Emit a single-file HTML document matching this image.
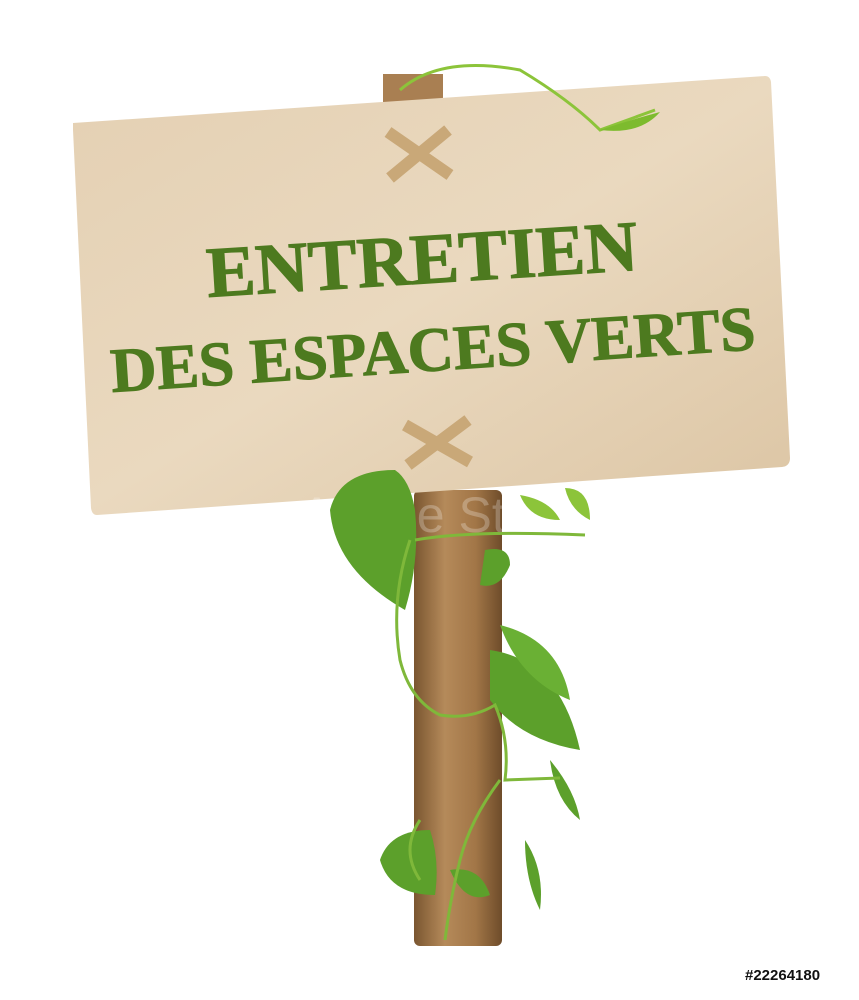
<!DOCTYPE html>
<html><head><meta charset="utf-8"><style>
html,body{margin:0;padding:0;background:#fff;}
body{width:859px;height:1000px;position:relative;overflow:hidden;font-family:"Liberation Sans",sans-serif;}
.id{position:absolute;left:745px;top:967px;font-size:15px;font-weight:bold;color:#111;}
</style></head><body>
<svg width="859" height="1000" viewBox="0 0 859 1000" style="position:absolute;left:0;top:0">
<defs>
<linearGradient id="wood" x1="0" y1="0" x2="1" y2="1">
<stop offset="0" stop-color="#e4d0b3"/><stop offset="0.5" stop-color="#ead9bf"/><stop offset="1" stop-color="#dcc5a4"/>
</linearGradient>
<linearGradient id="pole" x1="0" y1="0" x2="1" y2="0">
<stop offset="0" stop-color="#7a5630"/><stop offset="0.35" stop-color="#b58a5a"/><stop offset="0.7" stop-color="#a27647"/><stop offset="1" stop-color="#6e4c2a"/>
</linearGradient>
</defs>
<rect x="383" y="74" width="60" height="30" fill="#a97f52"/>
<rect x="414" y="490" width="88" height="456" rx="6" fill="url(#pole)"/>
<path d="M73 123 L765 76 Q770 76 771 82 L790 458 Q790 466 782 467 L97 515 Q92 515 91 508 L73 130 Z" fill="url(#wood)"/>
<path d="M388 132 L450 175 M448 130 L390 178" stroke="#c9a878" stroke-width="12"/>
<path d="M405 425 L470 462 M468 420 L408 465" stroke="#c9a878" stroke-width="12"/>
<g font-family="Liberation Serif,serif" font-weight="bold" fill="#4d7a1f" stroke="#4d7a1f" stroke-width="1">
<text x="208" y="297" font-size="72" transform="rotate(-3.6 208 297)" textLength="432" lengthAdjust="spacingAndGlyphs">ENTRETIEN</text>
<text x="112" y="392" font-size="63" transform="rotate(-3.8 112 392)" textLength="646" lengthAdjust="spacingAndGlyphs">DES ESPACES VERTS</text>
</g>
<g fill="#ffffff" opacity="0.25" font-size="50">
<text x="300" y="532">Adobe Stock</text>
</g>
<path d="M400 90 Q440 55 520 70 Q570 100 600 130 L655 110" stroke="#8cc43a" stroke-width="3" fill="none"/>
<path d="M600 130 Q630 120 660 112 Q640 135 600 130Z" fill="#7dbb2e"/>
<g fill="#5ca02b">
<path d="M395 470 Q340 470 330 510 Q335 570 405 610 Q420 560 415 510 Q410 480 395 470Z"/>
<path d="M485 550 Q510 545 510 565 Q500 590 480 585 Z"/>
<path d="M490 650 Q560 660 580 750 Q520 740 490 700 Z"/>
<path d="M500 625 Q560 640 570 700 Q520 680 500 625Z" fill="#6ab034"/>
<path d="M520 495 Q550 500 560 520 Q530 520 520 495Z" fill="#8cc43a"/>
<path d="M565 488 Q590 488 590 520 Q570 510 565 488Z" fill="#8cc43a"/>
<path d="M430 830 Q390 830 380 860 Q390 895 435 895 Q440 860 430 830Z"/>
<path d="M450 870 Q480 865 490 895 Q465 905 450 870Z"/>
<path d="M525 840 Q545 870 540 910 Q525 880 525 840Z"/>
<path d="M550 760 Q575 790 580 820 Q555 800 550 760Z"/>
</g>
<path d="M415 540 Q470 530 585 535 M410 540 Q390 600 400 660 Q410 700 440 715 Q470 720 495 705 Q510 740 505 780 L560 778 M500 780 Q470 820 460 860 Q450 900 445 940 M420 820 Q400 850 420 880" stroke="#7fb83a" stroke-width="3" fill="none"/>
</svg>
<div class="id">#22264180</div>
</body></html>
